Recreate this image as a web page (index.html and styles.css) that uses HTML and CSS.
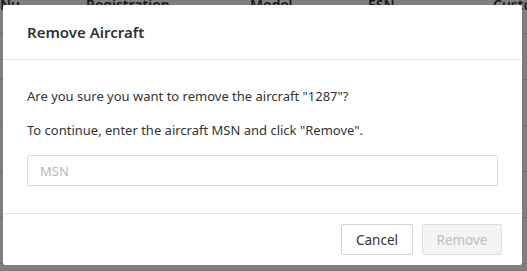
FILE: index.html
```html
<!DOCTYPE html>
<html lang="en">
<head>
    <meta charset="UTF-8">
    <meta name="viewport" content="width=device-width, initial-scale=1.0">
    <title>Remove Aircraft</title>
    <link rel="stylesheet" href="styles.css">
</head>
<body>
    <div class="page">
        <div class="table-head">
            <span class="col col-num">Nu</span>
            <span class="col col-reg">Registration</span>
            <span class="col col-model">Model</span>
            <span class="col col-esn">ESN</span>
            <span class="col col-cust">Customer</span>
        </div>
        <div class="table-row"></div>
        <div class="table-row"></div>
        <div class="table-row"></div>
        <div class="table-row"></div>
        <div class="table-row"></div>
    </div>
    <div class="backdrop">
        <div class="modal">
            <div class="modal-header">
                <h2 class="modal-title">Remove Aircraft</h2>
            </div>
            <div class="modal-body">
                <p>Are you sure you want to remove the aircraft "1287"?</p>
                <p>To continue, enter the aircraft MSN and click "Remove".</p>
                <input type="text" class="input-field" placeholder="MSN">
            </div>
            <div class="modal-footer">
                <button type="button" class="btn btn-cancel">Cancel</button>
                <button type="button" class="btn btn-disabled" disabled>Remove</button>
            </div>
        </div>
    </div>
</body>
</html>
```
FILE: styles.css
```css
body {
    font-family: "Noto Sans", "Open Sans", sans-serif;
    margin: 0;
    padding: 0;
    background-color: #fff;
    color: #333;
    height: 271px;
    overflow: hidden;
}

.table-head {
    display: flex;
    height: 33px;
    font-size: 14px;
    font-weight: 600;
    line-height: 10px;
    border-bottom: 1px solid #ddd;
    overflow: hidden;
}

.col {
    flex-shrink: 0;
}

.col-num { width: 86px; }
.col-reg { width: 164px; }
.col-model { width: 118px; }
.col-esn { width: 125px; }

.table-row {
    height: 45px;
    border-bottom: 1px solid #ddd;
}

.backdrop {
    position: absolute;
    top: 0;
    left: 0;
    width: 527px;
    height: 271px;
    background-color: rgba(0, 0, 0, 0.5);
}

.modal {
    position: absolute;
    top: 5px;
    left: 3px;
    width: 519px;
    height: 260px;
    background-color: #fff;
    border-radius: 2px;
    display: flex;
    flex-direction: column;
}

.modal-header {
    height: 54px;
    padding: 0 24px;
    display: flex;
    align-items: center;
    border-bottom: 1px solid #e5e5e5;
}

.modal-title {
    margin: 0;
    font-size: 15px;
    font-weight: 600;
    color: #333;
}

.modal-body {
    flex: 1;
    padding: 26px 24px 0;
}

.modal-body p {
    margin: 0 0 14px;
    font-size: 13px;
    line-height: 20px;
    color: #333;
}

.input-field {
    box-sizing: border-box;
    width: 471px;
    height: 31px;
    margin-top: 1px;
    padding: 0 12px;
    border: 1px solid #d9d9d9;
    border-radius: 2px;
    font-family: inherit;
    font-size: 13px;
    color: #333;
}

.input-field::placeholder {
    color: #b5b5b5;
}

.modal-footer {
    height: 52px;
    box-sizing: border-box;
    border-top: 1px solid #e5e5e5;
    display: flex;
    justify-content: flex-end;
    align-items: flex-start;
    gap: 9px;
    padding: 10px 20px 0;
}

.btn {
    height: 31px;
    padding: 0;
    background-color: #fff;
    border: 1px solid #d4d4d4;
    border-radius: 2px;
    font-family: inherit;
    font-size: 13.5px;
    color: #333;
}

.btn-cancel {
    width: 72px;
}

.btn-disabled {
    width: 80px;
    background-color: #f4f4f4;
    color: #bcbcbc;
    border-color: #dedede;
}
```
